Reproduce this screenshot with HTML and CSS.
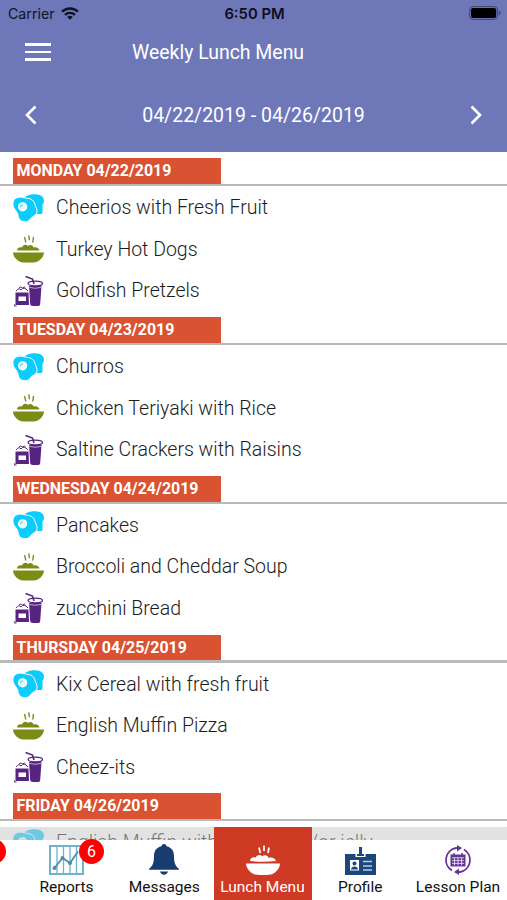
FILE: index.html
```html
<!DOCTYPE html>
<html lang="en">
<head>
<meta charset="utf-8">
<title>Weekly Lunch Menu</title>
<link rel="stylesheet" href="styles.css">
</head>
<body>
<svg class="sprite" aria-hidden="true">
  <symbol id="breakfast" viewBox="0 0 31 28">
    <path fill="#0cccfb" d="M11.500 4C13 1 18 0 22.500 .2c5 .2 8.500 2.500 8.500 6.300 0 2-.6 3-1.500 4V18c0 1.500-.5 2-2 2H20V10z"/>
    <path fill="#0cccfb" stroke="#fefefe" stroke-width="1" d="M5.500 3.300c4-.7 5.500.7 8.500.9 4.500.3 7 2.500 7.700 5.500.8 3.300 2.800 5 2.300 8.500-.5 3-3.500 3.500-5.500 5.500-2 3-4 4.300-7.500 3.900-4-.5-5.500-3-6-6.500C4.500 17-.2 15 -.2 10c0-3.500 2.200-6.200 5.700-6.700z"/>
    <circle cx="9.600" cy="12.800" r="4.600" fill="#fff"/>
    <circle cx="9.600" cy="12.800" r="3.400" fill="#e4f8fe"/>
    <path d="M7.500 13.300a2.500 2.500 0 0 1 2.300-2.500" fill="none" stroke="#0cccfb" stroke-width=".9"/>
  </symbol>
  <symbol id="bowl" viewBox="0 0 31 28">
    <path d="M0 17.500h31c-.3 4-3 7.500-7.500 9.500-2 .8-14 .8-16 0C3 25 .3 21.500 0 17.500z"/>
    <path d="M4 15.500c0-3 3-4 5-3 1-3 4-3.500 6-1.500 2-2 5-1 5.500 1.500 3-1 5.500.5 6 3z"/>
    <path d="M11.800 2c-.5 2 1.200 3.500.8 5.500M16 .3c-.5 2 .7 3 .2 4.900M20.300 2c.5 2-.8 3.500-.4 5.500" fill="none" stroke="currentColor" stroke-width="1.400"/>
  </symbol>
  <symbol id="snack" viewBox="0 0 31 32">
    <path fill="#582481" d="M16 11h12.500l-1.300 18c-.1 1.500-1 2-2.500 2h-5c-1.500 0-2.300-.7-2.500-2z"/>
    <ellipse cx="22.300" cy="8.500" rx="7.200" ry="2.300" fill="#fff" stroke="#582481" stroke-width="1.300"/>
    <path d="M12.500 1.500l7 2.500 1.500 5" fill="none" stroke="#582481" stroke-width="1.600"/>
    <path d="M16 12.300q6 2 12.500 0" fill="none" stroke="#fff" stroke-width=".6"/>
    <path fill="#582481" d="M2.500 17.500h13l.5 12.500H2.500z"/>
    <path fill="#fff" d="M5.500 21.500h7.500v4.500H5.500z"/>
    <path d="M3 16q3-4 5-1 3-4 7 1M6 13q2-2 3.500 0 2-2 3 0M2 30q-1-1-.5 1h2" fill="none" stroke="#582481" stroke-width="1"/>
  </symbol>
</svg>

<div class="screen">
  <header class="header">
    <div class="status">
      <div class="carrier">Carrier
        <svg class="wifi" viewBox="0 0 18 13"><g fill="none" stroke="#101326" stroke-width="2.400"><path d="M1 4.700a11.500 11.500 0 0 1 16 0M4 7.900a7.200 7.200 0 0 1 10 0"/></g><path fill="#101326" d="M6.200 9.900a4.200 4.200 0 0 1 5.600 0L9 12.700z"/></svg>
      </div>
      <div class="clock">6:50 PM</div>
      <svg class="battery" viewBox="0 0 32 14"><rect x=".6" y=".6" width="28" height="12.800" rx="3.500" fill="none" stroke="#3f446e"/><rect x="2" y="2" width="25.200" height="10" rx="2" fill="#000"/><path fill="#3f446e" d="M30 4.500c2 .8 2 4.200 0 5z"/></svg>
    </div>
    <div class="titlebar">
      <div class="burger"><i></i><i></i><i></i></div>
      <h1 class="title">Weekly Lunch Menu</h1>
    </div>
    <div class="week">
      <svg class="chevron" viewBox="0 0 12 20"><path d="M10.500 1.500L2 10l8.500 8.500"/></svg>
      <span>04/22/2019 - 04/26/2019</span>
      <svg class="chevron" viewBox="0 0 12 20"><path d="M1.500 1.500L10 10l-8.500 8.500"/></svg>
    </div>
  </header>

  <main class="menu">
    <section class="day">
      <h2 class="date">MONDAY 04/22/2019</h2>
      <ul class="meals">
        <li><svg class="ic breakfast"><use href="#breakfast"/></svg>Cheerios with Fresh Fruit</li>
        <li><svg class="ic bowl"><use href="#bowl"/></svg>Turkey Hot Dogs</li>
        <li><svg class="ic snack"><use href="#snack"/></svg>Goldfish Pretzels</li>
      </ul>
    </section>
    <section class="day">
      <h2 class="date">TUESDAY 04/23/2019</h2>
      <ul class="meals">
        <li><svg class="ic breakfast"><use href="#breakfast"/></svg>Churros</li>
        <li><svg class="ic bowl"><use href="#bowl"/></svg>Chicken Teriyaki with Rice</li>
        <li><svg class="ic snack"><use href="#snack"/></svg>Saltine Crackers with Raisins</li>
      </ul>
    </section>
    <section class="day">
      <h2 class="date">WEDNESDAY 04/24/2019</h2>
      <ul class="meals">
        <li><svg class="ic breakfast"><use href="#breakfast"/></svg>Pancakes</li>
        <li><svg class="ic bowl"><use href="#bowl"/></svg>Broccoli and Cheddar Soup</li>
        <li><svg class="ic snack"><use href="#snack"/></svg>zucchini Bread</li>
      </ul>
    </section>
    <section class="day">
      <h2 class="date">THURSDAY 04/25/2019</h2>
      <ul class="meals">
        <li><svg class="ic breakfast"><use href="#breakfast"/></svg>Kix Cereal with fresh fruit</li>
        <li><svg class="ic bowl"><use href="#bowl"/></svg>English Muffin Pizza</li>
        <li><svg class="ic snack"><use href="#snack"/></svg>Cheez-its</li>
      </ul>
    </section>
    <section class="day">
      <h2 class="date">FRIDAY 04/26/2019</h2>
      <ul class="meals">
        <li><svg class="ic breakfast"><use href="#breakfast"/></svg>English Muffin with butter and/or jelly</li>
      </ul>
    </section>
  </main>

  <nav class="tabs">
    <div class="tab edge"><span class="badge edge-badge"></span></div>
    <div class="tab reports">
      <svg class="tab-ic" viewBox="0 0 35 30"><g fill="none" stroke="#6fb4c9"><rect x="1" y="1" width="33" height="28" stroke-width="2"/><path d="M8 1v28M14.500 1v28M21 1v28M27.500 1v28" stroke-width="1.300"/><path d="M5.500 23l8-10 7.500 5L29 6.500" stroke="#468fac" stroke-width="1.700"/></g><g fill="#468fac"><circle cx="5.500" cy="23" r="2"/><circle cx="13.500" cy="13" r="2"/><circle cx="21" cy="18" r="2"/></g></svg>
      <span class="badge">6</span>
      <span>Reports</span>
    </div>
    <div class="tab messages">
      <svg class="tab-ic" viewBox="0 0 30 31"><path fill="#173d70" d="M15 0c1.700 0 2.500 1 2.500 2.300C23 3.500 25 7.500 25 12c0 7 1.500 10 5 13v.7H0V25c3.500-3 5-6 5-13 0-4.500 2-8.500 7.500-9.700C12.500 1 13.300 0 15 0zM11 27.500h8c-.5 2-2 3.200-4 3.200s-3.500-1.200-4-3.200z"/></svg>
      <span>Messages</span>
    </div>
    <div class="tab active">
      <svg class="tab-ic" viewBox="0 0 34 30"><path d="M0 18.500h34c-.3 4.500-3.300 8.500-8 10.700-2 .9-16 .9-18 0C3.300 27 .3 23 0 18.500z"/><path d="M4 16c0-3 3.300-4.500 5.700-3.300 1-3 4.300-3.600 6.500-1.500 2.300-2 5.800-1 6.300 1.700 3.500-1 6.500.4 7.500 3.100q-13 1.500-26 0z"/><path d="M13 2.500l1.300 5.500M18 .500v5.500M23 2.500L22 8" fill="none" stroke="currentColor" stroke-width="1.700"/></svg>
      <span>Lunch Menu</span>
    </div>
    <div class="tab profile">
      <svg class="tab-ic" viewBox="0 0 31 28"><path fill="#1c477c" d="M0 7h31v21H0z"/><path fill="#fff" d="M10.500 10V7h10v3z"/><path fill="#1c477c" d="M12 9V7h7v2zM14 0h3v9h-3z"/><path fill="#fff" d="M5 13h9v10.500H5z"/><circle cx="9.500" cy="16.500" r="2" fill="#1c477c"/><path fill="#1c477c" d="M6 22.500c0-4 7-4 7 0z"/><path d="M18 14.500h9M18 19h9M18 23h9" stroke="#b7cce6" stroke-width="1.500"/></svg>
      <span>Profile</span>
    </div>
    <div class="tab lesson">
      <svg class="tab-ic" viewBox="0 0 28 30"><g fill="none" stroke="#633694" stroke-width="1.800"><path d="M8 25.500A12.200 12.200 0 0 1 12 3h4M20 4.500A12.200 12.200 0 0 1 16 27h-4"/></g><path fill="#633694" d="M13 0l5 3-5 3.500zM15 23.500L10 27l5 3z"/><path fill="#633694" d="M6.500 9.500h15v12h-15z"/><path d="M8 12.800h12M8 15.600h12M8 18.400h12M10.500 12.500v8M14 12.500v8M17.500 12.500v8" stroke="#fff" stroke-width=".7"/><path d="M10 8v3M18 8v3" stroke="#633694" stroke-width="1.500"/></svg>
      <span>Lesson Plan</span>
    </div>
  </nav>
</div>
</body>
</html>
```
FILE: styles.css
```css
* { box-sizing: border-box; }
body { margin: 0; font-family: Roboto, "Liberation Sans", sans-serif; background: #fff; }
.sprite { display: none; }
.screen { position: relative; width: 507px; height: 900px; overflow: hidden; background: #fefefe; }

.header { height: 152.200px; background: #6e78b8; color: #fff; display: flex; flex-direction: column; }
.status { height: 28px; padding: 0 6px 0 8px; display: grid; grid-template-columns: 1fr auto 1fr; align-items: center; color: #101326; }
.carrier { display: flex; align-items: center; gap: 6px; font: 14.200px Inter, sans-serif; }
.wifi { width: 18px; height: 13px; }
.clock { font: 600 14.800px Inter, sans-serif; color: #0c0e1d; }
.battery { width: 32px; height: 14px; margin-bottom: 1px; justify-self: end; }
.titlebar { height: 49px; display: flex; align-items: center; padding-left: 25px; }
.burger { width: 26px; display: flex; flex-direction: column; gap: 5px; }
.burger i { height: 2.700px; background: #fff; }
.title { margin: 1px 0 0 81px; font-size: 19.450px; font-weight: 400; }
.week { height: 77px; padding: 2px 25px 0; display: flex; align-items: center; justify-content: space-between; font-size: 19.500px; }
.chevron { width: 12px; height: 20px; fill: none; stroke: #fff; stroke-width: 2.600; }

.day { padding-top: 6.250px; }
.date { margin: 0 0 0 13px; width: 208px; height: 25.800px; padding-left: 3.500px; background: #d95231; color: #fff; font-size: 15.950px; line-height: 26px; font-weight: 700; white-space: nowrap; }
.meals { margin: 0; padding: 0; list-style: none; }
.meals::before { content: ""; display: block; height: 2.200px; background: #b9b9b9; }
.meals li { height: 41.500px; padding: 1.400px 0 0 13px; display: flex; align-items: center; gap: 12px; font-size: 19.500px; font-weight: 300; color: #1c1c1c; white-space: nowrap; }
.ic { width: 31px; height: 28px; flex: none; }
.bowl { color: #7c8b16; fill: currentColor; }
.snack { height: 32px; }

.tabs { position: absolute; left: 0; bottom: 0; width: 507px; height: 73.500px; display: grid; grid-template-columns: 18px 97px 98.500px 98px 97.500px 98px; background: linear-gradient(rgba(200,200,200,.52) 12.500px, #fefefe 12.500px); }
.tab { position: relative; display: flex; flex-direction: column; align-items: center; justify-content: flex-end; gap: 2px; padding-bottom: 3px; font-size: 15.500px; line-height: 20px; color: #111; white-space: nowrap; }
.tab-ic { width: 31px; height: 28px; }
.reports .tab-ic { width: 35px; height: 30px; }
.messages .tab-ic { width: 30px; height: 31px; }
.active .tab-ic { width: 34px; height: 30px; }
.lesson .tab-ic { width: 28px; height: 30px; }
.active { background: #cf3a25; color: #fff; fill: currentColor; }
.badge { position: absolute; left: 61px; top: 12px; width: 25px; height: 25px; border-radius: 50%; background: #fe0000; color: #fff; font-size: 16px; line-height: 25px; text-align: center; }
.edge-badge { left: -19px; }
```
